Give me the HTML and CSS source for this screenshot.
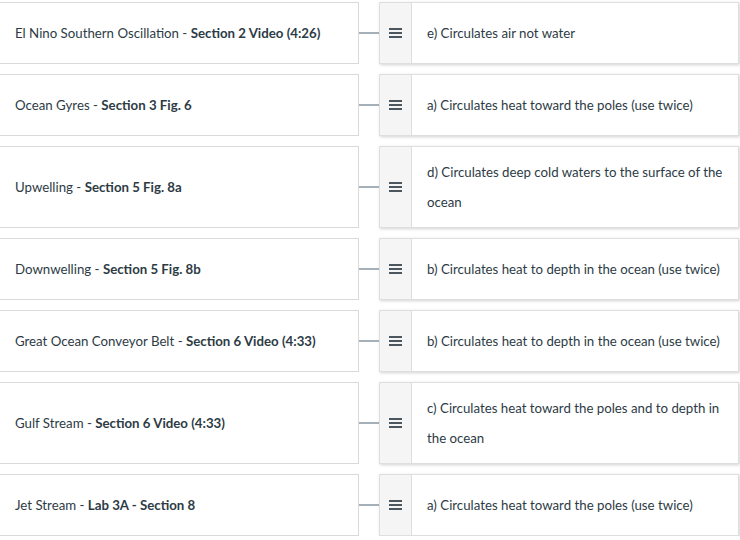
FILE: index.html
```html
<!DOCTYPE html>
<html>
<head>
<meta charset="utf-8">
<link rel="stylesheet" href="styles.css">
</head>
<body>
<div class="list">
  <div class="row">
    <div class="term"><span>El Nino Southern Oscillation - <b>Section 2 Video (4:26)</b></span></div>
    <div class="link"></div>
    <div class="match"><div class="handle"><span class="bars"></span></div><div class="answer">e) Circulates air not water</div></div>
  </div>
  <div class="row">
    <div class="term"><span>Ocean Gyres - <b>Section 3 Fig. 6</b></span></div>
    <div class="link"></div>
    <div class="match"><div class="handle"><span class="bars"></span></div><div class="answer">a) Circulates heat toward the poles (use twice)</div></div>
  </div>
  <div class="row">
    <div class="term"><span>Upwelling - <b>Section 5 Fig. 8a</b></span></div>
    <div class="link"></div>
    <div class="match"><div class="handle"><span class="bars"></span></div><div class="answer">d) Circulates deep cold waters to the surface of the ocean</div></div>
  </div>
  <div class="row">
    <div class="term"><span>Downwelling - <b>Section 5 Fig. 8b</b></span></div>
    <div class="link"></div>
    <div class="match"><div class="handle"><span class="bars"></span></div><div class="answer">b) Circulates heat to depth in the ocean (use twice)</div></div>
  </div>
  <div class="row">
    <div class="term"><span>Great Ocean Conveyor Belt - <b>Section 6 Video (4:33)</b></span></div>
    <div class="link"></div>
    <div class="match"><div class="handle"><span class="bars"></span></div><div class="answer">b) Circulates heat to depth in the ocean (use twice)</div></div>
  </div>
  <div class="row">
    <div class="term"><span>Gulf Stream - <b>Section 6 Video (4:33)</b></span></div>
    <div class="link"></div>
    <div class="match"><div class="handle"><span class="bars"></span></div><div class="answer">c) Circulates heat toward the poles and to depth in the ocean</div></div>
  </div>
  <div class="row">
    <div class="term"><span>Jet Stream - <b>Lab 3A - Section 8</b></span></div>
    <div class="link"></div>
    <div class="match"><div class="handle"><span class="bars"></span></div><div class="answer">a) Circulates heat toward the poles (use twice)</div></div>
  </div>
</div>
</body>
</html>
```
FILE: styles.css
```css
html, body {
  margin: 0;
  padding: 0;
  background: #fff;
}
body {
  font-family: "Lato", "Liberation Sans", sans-serif;
  font-size: 13.25px;
  color: #2d3b45;
}
.list {
  display: flex;
  flex-direction: column;
  gap: 10px;
  padding-top: 2px;
  margin-left: -1px;
}
.row {
  display: grid;
  grid-template-columns: 360px 20px 360px;
  align-items: stretch;
}
.term {
  border: 1px solid #d7dbde;
  padding: 0 15px;
  display: flex;
  align-items: center;
  white-space: nowrap;
}
.term b {
  font-weight: 700;
  color: #2d3b45;
}
.link {
  display: flex;
  align-items: center;
}
.link::before {
  content: "";
  display: block;
  width: 100%;
  height: 2px;
  background: #a5b0b8;
}
.match {
  display: flex;
  border: 1px solid #dcdfe2;
  box-shadow: 1px 1px 3px rgba(0, 0, 0, 0.18);
  min-height: 60px;
  background: #fff;
}
.handle {
  width: 31px;
  flex: none;
  background: #f5f5f5;
  border-right: 1px solid #dcdfe2;
  display: flex;
  align-items: center;
  justify-content: center;
}
.bars {
  display: block;
  width: 13px;
  height: 2px;
  background: #4b565e;
  box-shadow: 0 -4px 0 #4b565e, 0 4px 0 #4b565e;
}
.answer {
  flex: 1;
  padding: 10px 15px;
  line-height: 30px;
  display: flex;
  align-items: center;
}
```
